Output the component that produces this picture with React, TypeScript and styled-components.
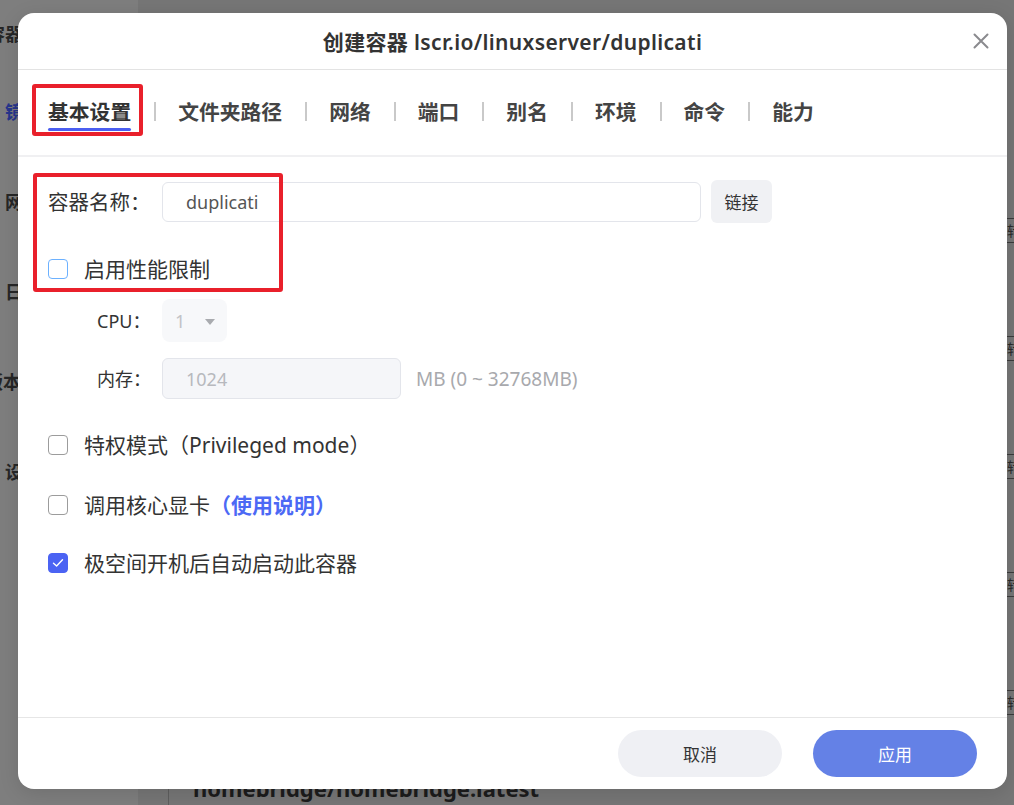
import React from 'react';
import styled, { createGlobalStyle, css } from 'styled-components';

const GlobalStyle = createGlobalStyle`
  html, body {
    margin: 0;
    padding: 0;
  }
  body {
    font-family: "Noto Sans", "Noto Sans CJK SC", sans-serif;
    background: #767676;
    overflow: hidden;
  }
  * {
    box-sizing: border-box;
  }
`;

const Page = styled.div`
  position: relative;
  width: 1014px;
  height: 805px;
  display: grid;
  grid-template-columns: 138px 1fr;
  overflow: hidden;
`;

/* background app, dimmed by the dialog */
const Sidebar = styled.aside`
  background: #7e7e7e;
  overflow: hidden;
`;

const SideTitle = styled.div<{ $shift: number }>`
  height: 66px;
  line-height: 66px;
  text-indent: ${({ $shift }) => $shift}px;
  font-size: 18px;
  font-weight: 700;
  color: #262626;
  white-space: nowrap;
  font-family: "Noto Sans CJK SC", sans-serif;
`;

const NavItem = styled.div<{ $shift: number; $active?: boolean }>`
  height: 90px;
  line-height: 90px;
  text-indent: ${({ $shift }) => $shift}px;
  font-size: 18px;
  font-weight: 700;
  color: ${({ $active }) => ($active ? '#27358c' : '#262626')};
  white-space: nowrap;
  font-family: "Noto Sans CJK SC", sans-serif;
`;

const Main = styled.main`
  background: #767676;
  overflow: hidden;
  padding-top: 174px;
`;

const TableRow = styled.div`
  display: grid;
  grid-template-columns: 30px 839px 1fr;
  height: 118px;
`;

const NameCell = styled.div`
  border-left: 1px solid #5e5e5e;
  padding: 13px 0 0 24px;
  font-size: 22px;
  line-height: 22px;
  font-weight: 700;
  color: #1c1c1c;
  white-space: nowrap;
`;

const ActionCell = styled.div`
  padding-top: 44px;
  overflow: hidden;
`;

const ActionTag = styled.div`
  height: 25px;
  border-top: 1px solid #3c3c3c;
  border-bottom: 1px solid #3c3c3c;
  font-size: 14px;
  line-height: 23px;
  color: #2a2a2a;
  white-space: nowrap;
  font-family: "Noto Sans CJK SC", sans-serif;
`;

/* dialog */
const Overlay = styled.div`
  position: absolute;
  inset: 0;
  padding: 13px 0 0 18px;
`;

const Modal = styled.section`
  width: 989px;
  height: 776px;
  background: #fff;
  border-radius: 16px;
  display: flex;
  flex-direction: column;
  box-shadow: 0 4px 20px rgba(0, 0, 0, 0.12);
`;

const Header = styled.header`
  height: 57px;
  flex-shrink: 0;
  display: grid;
  grid-template-columns: 1fr auto 1fr;
  align-items: center;
  padding: 0 18px;
  border-bottom: 1px solid #e3e3e3;
`;

const Title = styled.h2`
  grid-column: 2;
  margin: 0;
  font-size: 21px;
  font-weight: 600;
  letter-spacing: 0.35px;
  color: #333;
`;

const CloseButton = styled.button`
  justify-self: end;
  width: 16px;
  height: 16px;
  padding: 0;
  border: none;
  background: none;
  display: flex;
  cursor: pointer;
`;

const TabBar = styled.nav`
  height: 87px;
  flex-shrink: 0;
  display: flex;
  align-items: flex-start;
  padding: 27px 0 0 30px;
  border-bottom: 2px solid #f0f0f2;
`;

const Tab = styled.div<{ $active?: boolean; $marked?: boolean }>`
  position: relative;
  font-size: 20.8px;
  line-height: 28px;
  font-weight: 700;
  color: #444;
  white-space: nowrap;
  font-family: "Noto Sans CJK SC", sans-serif;

  ${({ $active }) =>
    $active &&
    css`
      color: #333;
      &::after {
        content: '';
        position: absolute;
        left: 0;
        right: 0;
        bottom: -6px;
        height: 3px;
        border-radius: 2px;
        background: #4b5ef0;
      }
    `}

  ${({ $marked }) =>
    $marked &&
    css`
      &::before {
        content: '';
        position: absolute;
        left: -16px;
        right: -12px;
        top: -13px;
        bottom: -11px;
        border: 4px solid #e9202b;
        border-radius: 3px;
      }
    `}
`;

const TabDivider = styled.span`
  width: 2px;
  height: 19px;
  margin: 5px 22px 0 23px;
  background: #c9c9c9;
  flex-shrink: 0;
`;

const Body = styled.div`
  position: relative;
  flex: 1;
  padding: 23px 30px 0;
`;

const Marker = styled.div`
  position: absolute;
  left: 15px;
  top: 16px;
  width: 250px;
  height: 119px;
  border: 4px solid #e9202b;
  border-radius: 3px;
  pointer-events: none;
`;

const FieldRow = styled.div<{ $gap?: number; $sub?: boolean }>`
  display: flex;
  align-items: center;
  margin-top: ${({ $gap }) => $gap ?? 0}px;
  margin-left: ${({ $sub }) => ($sub ? 49 : 0)}px;
  min-height: 20px;
`;

const Label = styled.label<{ $width: number; $small?: boolean }>`
  width: ${({ $width }) => $width}px;
  flex-shrink: 0;
  font-size: ${({ $small }) => ($small ? 18 : 20.5)}px;
  line-height: 22px;
  color: #333;
  white-space: nowrap;
`;

const TextInput = styled.div<{ $width: number; $disabled?: boolean }>`
  width: ${({ $width }) => $width}px;
  height: ${({ $disabled }) => ($disabled ? 41 : 40)}px;
  padding-left: 23px;
  display: flex;
  align-items: center;
  font-size: 18px;
  color: ${({ $disabled }) => ($disabled ? '#b7b9be' : '#555')};
  background: ${({ $disabled }) => ($disabled ? '#f5f6f9' : '#fff')};
  border: 1px solid #e3e5eb;
  border-radius: 6px;
`;

const SmallButton = styled.button`
  margin-left: 10px;
  width: 61px;
  height: 43px;
  border: none;
  border-radius: 6px;
  background: #f0f1f4;
  font-family: "Noto Sans CJK SC", sans-serif;
  font-size: 17px;
  color: #333;
  padding: 0;
`;

const Select = styled.div`
  width: 65px;
  height: 43px;
  padding: 0 0 0 13px;
  display: flex;
  align-items: center;
  gap: 20px;
  background: #f7f8fa;
  border-radius: 8px;
  font-size: 18px;
  color: #c2c3c7;
`;

const Caret = styled.span`
  width: 0;
  height: 0;
  border-left: 5px solid transparent;
  border-right: 5px solid transparent;
  border-top: 6px solid #a9abaf;
  margin-top: 2px;
`;

const Hint = styled.span`
  margin-left: 15px;
  font-size: 19px;
  color: #a8a9ad;
`;

const CheckBox = styled.span<{ $state: 'off' | 'focus' | 'on' }>`
  width: 20px;
  height: 20px;
  flex-shrink: 0;
  border-radius: 4px;
  display: flex;
  align-items: center;
  justify-content: center;
  border: 1.5px solid
    ${({ $state }) => ($state === 'focus' ? '#6cb1ff' : $state === 'on' ? '#4b63f3' : '#9c9c9c')};
  background: ${({ $state }) => ($state === 'on' ? '#4b63f3' : '#fff')};
`;

const CheckText = styled.span`
  margin-left: 16px;
  font-size: 21px;
  line-height: 22px;
  color: #333;
  white-space: nowrap;
`;

const HelpLink = styled.a`
  font-weight: 700;
  color: #4c69f5;
  text-decoration: none;
`;

const Footer = styled.footer`
  height: 72px;
  flex-shrink: 0;
  display: flex;
  align-items: center;
  justify-content: flex-end;
  gap: 31px;
  padding-right: 30px;
  border-top: 1px solid #e6e6e6;
`;

const PillButton = styled.button<{ $primary?: boolean }>`
  width: 164px;
  height: 47px;
  border: none;
  border-radius: 24px;
  font-family: "Noto Sans CJK SC", sans-serif;
  font-size: 17px;
  background: ${({ $primary }) => ($primary ? '#6481e6' : '#eff0f4')};
  color: ${({ $primary }) => ($primary ? '#fff' : '#333')};
`;

const CheckIcon = () => (
  <svg width="12" height="10" viewBox="0 0 12 10" fill="none">
    <path d="M1.5 5.2 L4.6 8 L10.5 1.8" stroke="#fff" strokeWidth="1.4" strokeLinecap="round" strokeLinejoin="round" />
  </svg>
);

const tabs = ['基本设置', '文件夹路径', '网络', '端口', '别名', '环境', '命令', '能力'];

const navItems = [
  { label: '镜像', shift: 5, active: true },
  { label: '网络', shift: 5 },
  { label: '日志', shift: 5 },
  { label: '版本', shift: -15 },
  { label: '设置', shift: 5 },
];

const rows = ['', '', '', '', '', 'homebridge/homebridge:latest'];

const App: React.FC = () => {
  return (
    <>
      <GlobalStyle />
      <Page>
        <Sidebar>
          <SideTitle $shift={-13}>容器</SideTitle>
          {navItems.map((item) => (
            <NavItem key={item.label} $shift={item.shift} $active={item.active}>
              {item.label}
            </NavItem>
          ))}
        </Sidebar>
        <Main>
          {rows.map((name, i) => (
            <TableRow key={i}>
              <div />
              <NameCell>{name}</NameCell>
              <ActionCell>
                <ActionTag>转移</ActionTag>
              </ActionCell>
            </TableRow>
          ))}
        </Main>

        <Overlay>
          <Modal>
            <Header>
              <Title>创建容器 lscr.io/linuxserver/duplicati</Title>
              <CloseButton aria-label="关闭">
                <svg width="16" height="16" viewBox="0 0 16 16">
                  <path d="M1.5 1.5 L14.5 14.5 M14.5 1.5 L1.5 14.5" stroke="#8a8a8e" strokeWidth="2" strokeLinecap="round" />
                </svg>
              </CloseButton>
            </Header>

            <TabBar>
              {tabs.map((t, i) => (
                <React.Fragment key={t}>
                  {i > 0 && <TabDivider />}
                  <Tab $active={i === 0} $marked={i === 0}>
                    {t}
                  </Tab>
                </React.Fragment>
              ))}
            </TabBar>

            <Body>
              <Marker />
              <FieldRow>
                <Label $width={114}>容器名称：</Label>
                <TextInput $width={539}>duplicati</TextInput>
                <SmallButton>链接</SmallButton>
              </FieldRow>

              <FieldRow $gap={35}>
                <CheckBox $state="focus" />
                <CheckText>启用性能限制</CheckText>
              </FieldRow>

              <FieldRow $gap={19} $sub>
                <Label $width={65} $small>
                  CPU：
                </Label>
                <Select>
                  1
                  <Caret />
                </Select>
              </FieldRow>

              <FieldRow $gap={16} $sub>
                <Label $width={65} $small>
                  内存：
                </Label>
                <TextInput $width={239} $disabled>
                  1024
                </TextInput>
                <Hint>MB (0 ~ 32768MB)</Hint>
              </FieldRow>

              <FieldRow $gap={35}>
                <CheckBox $state="off" />
                <CheckText>特权模式（Privileged mode）</CheckText>
              </FieldRow>

              <FieldRow $gap={38}>
                <CheckBox $state="off" />
                <CheckText>
                  调用核心显卡<HelpLink href="#">（使用说明）</HelpLink>
                </CheckText>
              </FieldRow>

              <FieldRow $gap={36}>
                <CheckBox $state="on">
                  <CheckIcon />
                </CheckBox>
                <CheckText>极空间开机后自动启动此容器</CheckText>
              </FieldRow>
            </Body>

            <Footer>
              <PillButton>取消</PillButton>
              <PillButton $primary>应用</PillButton>
            </Footer>
          </Modal>
        </Overlay>
      </Page>
    </>
  );
};

export default App;
